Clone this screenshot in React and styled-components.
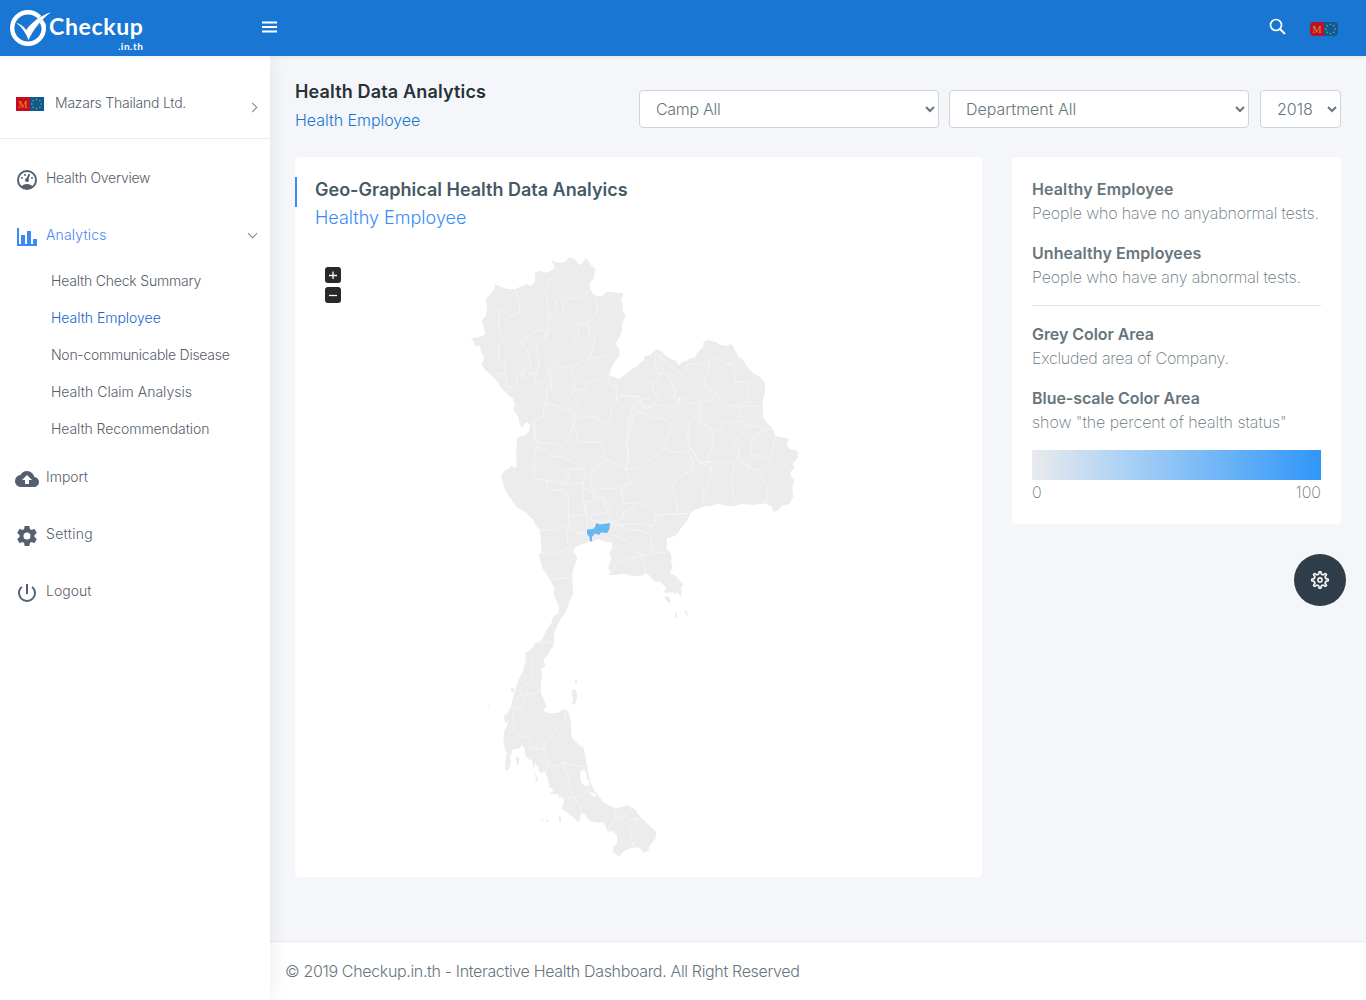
import React from "react";
import styled, { createGlobalStyle } from "styled-components";
import { MdCloudUpload, MdPowerSettingsNew } from "react-icons/md";
import { TfiSettings } from "react-icons/tfi";

const GlobalStyle = createGlobalStyle`
  *, *::before, *::after { box-sizing: border-box; }
  body {
    margin: 0;
    background: #f4f6fa;
    color: #67757c;
    font-family: Inter, Roboto, sans-serif;
    font-size: 16px;
    font-weight: 300;
    line-height: 24px;
  }
  h1, h2, h3, p, ul { margin: 0; padding: 0; }
`;

const Page = styled.div`
  display: flex;
  flex-direction: column;
  height: 1000px;
  overflow: hidden;
`;

const Header = styled.header`
  position: relative;
  z-index: 3;
  flex: none;
  display: flex;
  align-items: center;
  height: 56px;
  padding: 0 28px 0 9px;
  background: #1976d2;
  box-shadow: 0 1px 5px rgba(0, 0, 0, 0.08);
`;

const Brand = styled.a`
  display: flex;
  width: 253px;
  height: 48px;
  color: #fff;
`;

const BrandName = styled.span`
  display: flex;
  flex-direction: column;
  align-items: flex-end;
  width: 95px;
  padding-top: 8px;
  font-family: Lato, sans-serif;
  font-weight: 700;
  font-size: 23px;
  line-height: 28px;
  letter-spacing: 0.65px;
  white-space: nowrap;
`;

const BrandDomain = styled.small`
  font-size: 10px;
  line-height: 12px;
  letter-spacing: 0.55px;
`;

const MenuIcon = styled.svg`
  margin-bottom: 2px;
`;

const HeaderTools = styled.div`
  display: flex;
  align-items: center;
  gap: 24px;
  margin-left: auto;
`;

const SearchIcon = styled.svg`
  margin-bottom: 3px;
`;

const FlagBox = styled.span`
  display: flex;
  margin-top: ${(p) => p.$top || 0}px;
  border-radius: ${(p) => p.$radius || 0}px;
  overflow: hidden;
  opacity: ${(p) => p.$opacity || 1};
`;

const Body = styled.div`
  flex: 1;
  display: flex;
  min-height: 0;
`;

const Sidebar = styled.aside`
  position: relative;
  z-index: 2;
  flex: none;
  width: 270px;
  background: #fff;
  box-shadow: 1px 0 20px rgba(0, 0, 0, 0.08);
  font-size: 14px;
  font-weight: 300;
  color: #56606b;
`;

const Profile = styled.div`
  display: flex;
  align-items: center;
  height: 83px;
  margin-bottom: 11px;
  padding: 13px 12px 0 16px;
  border-bottom: 1px solid #e9ebee;
  gap: 11px;
`;

const Chevron = styled.span`
  width: 7px;
  height: 7px;
  margin: ${(p) => (p.$down ? "0 2px 3px auto" : "8px 2px 0 auto")};
  border: solid #7f8790;
  border-width: 1px 1px 0 0;
  transform: rotate(${(p) => (p.$down ? 135 : 45)}deg);
`;

const NavItem = styled.a`
  display: flex;
  align-items: center;
  height: ${(p) => p.$height || 57}px;
  padding: 0 12px 0 15px;
  color: ${(p) => (p.$active ? "#4a84f6" : "inherit")};
  gap: 7px;
`;

const NavIcon = styled.span`
  display: flex;
  padding-top: ${(p) => p.$drop || 3}px;
  color: ${(p) => (p.$active ? "#398bf7" : "#54606f")};
`;

const SubItem = styled.a`
  display: block;
  height: 37px;
  padding-left: 51px;
  line-height: 35px;
  color: ${(p) => (p.$active ? "#1965cf" : "inherit")};
`;

const Label = styled.span`
  padding-bottom: ${(p) => p.$lift || 0}px;
  letter-spacing: ${(p) => p.$ls || 0}px;
  white-space: nowrap;
`;

const Main = styled.main`
  flex: 1;
  display: flex;
  flex-direction: column;
  min-width: 0;
`;

const TitleBar = styled.div`
  display: flex;
  justify-content: space-between;
  height: 101px;
  padding: 24px 25px 0;
`;

const PageTitle = styled.h1`
  font-size: 18px;
  line-height: 24px;
  font-weight: 600;
  color: #263238;
`;

const Crumb = styled.p`
  margin-top: 4px;
  line-height: 24px;
  color: #1976d2;
`;

const Filters = styled.div`
  display: flex;
  padding-top: 10px;
`;

const Select = styled.select`
  width: ${(p) => p.$width}px;
  height: 38px;
  margin-left: ${(p) => p.$gap || 0}px;
  padding: 6px 12px;
  border: 1px solid #ced4da;
  border-radius: 4px;
  background: #fff;
  color: #67757c;
  font: inherit;
  letter-spacing: ${(p) => p.$ls || 0}px;
`;

const Columns = styled.div`
  flex: 1;
  display: flex;
  align-items: flex-start;
  gap: 30px;
  padding: 0 25px;
`;

const Card = styled.section`
  width: ${(p) => p.$width}px;
  height: ${(p) => p.$height}px;
  padding: 20px;
  border-radius: 4px;
  background: #fff;
`;

const CardTitle = styled.h2`
  margin-left: -20px;
  padding-left: 18px;
  border-left: 2px solid #398bf7;
  font-size: 18px;
  line-height: 26px;
  height: 30px;
  font-weight: 600;
  color: #455a64;
`;

const CardSubtitle = styled.h3`
  font-size: 18px;
  line-height: 22px;
  font-weight: 300;
  color: #398bf7;
`;

const MapArea = styled.div`
  display: flex;
  align-items: flex-start;
  padding: 28px 0 0 10px;
`;

const ZoomControls = styled.div`
  display: flex;
  flex-direction: column;
  gap: 4px;
  width: 16px;
  padding-top: 10px;
`;

const ZoomButton = styled.button`
  display: flex;
  align-items: center;
  justify-content: center;
  width: 16px;
  height: 16px;
  padding: 0;
  border: 0;
  border-radius: 3px;
  background: #292929;
  color: #fff;
`;

const MapSvg = styled.svg`
  margin: -2px 0 0 129px;
  display: block;
`;

const Term = styled.h3`
  font-size: 16px;
  line-height: 24px;
  font-weight: 600;
  color: #67757c;
`;

const Description = styled.p`
  margin-bottom: ${(p) => p.$bottom}px;
  font-weight: 200;
  color: #67757c;
`;

const Rule = styled.hr`
  height: 1px;
  margin: 0 0 16px;
  border: 0;
  background: #e2e4e6;
`;

const Gradient = styled.div`
  height: 30px;
  background: linear-gradient(to right, #e9ebed, #a6cff5 35%, #2f96f9);
`;

const Range = styled.div`
  display: flex;
  justify-content: space-between;
  font-weight: 200;
`;

const Side = styled.div`
  display: flex;
  flex-direction: column;
  width: 329px;
`;

const SettingsButton = styled.button`
  display: flex;
  align-items: center;
  justify-content: center;
  align-self: flex-end;
  width: 52px;
  height: 52px;
  margin: 30px -5px 0 0;
  padding: 0;
  border: 0;
  border-radius: 50%;
  background: #2f3d4a;
  color: #fff;
`;

const Footer = styled.footer`
  flex: none;
  height: 59px;
  padding: 17px 15px;
  border-top: 1px solid #e9ebee;
  background: #fff;
`;

const LogoMark = styled.svg`
  flex: none;
  margin-right: -4.5px;
`;

function CheckLogo() {
  return (
    <LogoMark width="44" height="48" viewBox="0 0 44 48">
      <circle cx="19" cy="24" r="15.8" fill="none" stroke="#fff" strokeWidth="4.4" />
      <path d="M27 17 38 6 44 11 32 24Z" fill="#1976d2" />
      <path d="M34 15.500a17.500 17.500 0 0 1 3 8.500l-4.400 0a14 14 0 0 0-2-5.500Z" fill="#fff" />
      <path d="M7 18.5c3.8 1.2 7.300 3.600 10.200 7.400C23.500 17.500 32 11.500 42 8.300 32.500 15.500 24.500 25 19.500 36c-2.500-7-6.500-12.500-12.500-17.500Z" fill="#fff" />
    </LogoMark>
  );
}

function Flag() {
  const stars = Array.from({ length: 8 }, (_, i) => {
    const a = (i * Math.PI) / 4;
    return [20.5 + 4.7 * Math.cos(a), 7 + 4.7 * Math.sin(a)];
  });
  return (
    <svg width="28" height="14" viewBox="0 0 28 14">
      <rect width="14" height="14" fill="#c40d1e" />
      <rect x="14" width="14" height="14" fill="#0b5a94" />
      <text x="7" y="11" textAnchor="middle" fontFamily="Liberation Serif, serif" fontSize="10.5" fill="#f08a1c">M</text>
      {stars.map(([x, y], i) => (
        <rect key={i} x={x - 0.7} y={y - 0.7} width="1.4" height="1.4" fill="#a3a44b" />
      ))}
    </svg>
  );
}

const gauge =
  "M12,2A10,10 0 0,0 2,12A10,10 0 0,0 12,22A10,10 0 0,0 22,12A10,10 0 0,0 12,2M12,4A8,8 0 0,1 20,12C20,14.4 19,16.5 17.3,18C15.9,16.7 14,16 12,16C10,16 8.2,16.7 6.7,18C5,16.5 4,14.4 4,12A8,8 0 0,1 12,4M14,5.89C13.62,5.9 13.26,6.15 13.1,6.54L11.81,9.77L11.71,10C11,10.13 10.41,10.6 10.14,11.26C9.73,12.29 10.23,13.45 11.26,13.86C12.29,14.27 13.45,13.77 13.86,12.74C14.12,12.08 14,11.32 13.57,10.76L13.67,10.5L14.96,7.29L14.97,7.26C15.17,6.75 14.92,6.17 14.41,5.96C14.28,5.91 14.15,5.89 14,5.89M10,6A1,1 0 0,0 9,7A1,1 0 0,0 10,8A1,1 0 0,0 11,7A1,1 0 0,0 10,6M7,9A1,1 0 0,0 6,10A1,1 0 0,0 7,11A1,1 0 0,0 8,10A1,1 0 0,0 7,9M17,9A1,1 0 0,0 16,10A1,1 0 0,0 17,11A1,1 0 0,0 18,10A1,1 0 0,0 17,9Z";
const bars = "M22,21H2V3H4V19H6V10H10V19H12V6H16V19H18V14H22V21Z";
const cog =
  "M12,15.5A3.5,3.5 0 0,1 8.5,12A3.5,3.5 0 0,1 12,8.5A3.5,3.5 0 0,1 15.5,12A3.5,3.5 0 0,1 12,15.5M19.43,12.97C19.47,12.65 19.5,12.33 19.5,12C19.5,11.67 19.47,11.34 19.43,11L21.54,9.37C21.73,9.22 21.78,8.95 21.66,8.73L19.66,5.27C19.54,5.05 19.27,4.96 19.05,5.05L16.56,6.05C16.04,5.66 15.5,5.32 14.87,5.07L14.5,2.42C14.46,2.18 14.25,2 14,2H10C9.75,2 9.54,2.18 9.5,2.42L9.13,5.07C8.5,5.32 7.96,5.66 7.44,6.05L4.95,5.05C4.73,4.96 4.46,5.05 4.34,5.27L2.34,8.73C2.21,8.95 2.27,9.22 2.46,9.37L4.57,11C4.53,11.34 4.5,11.67 4.5,12C4.5,12.33 4.53,12.65 4.57,12.97L2.46,14.63C2.27,14.78 2.21,15.05 2.34,15.27L4.34,18.73C4.46,18.95 4.73,19.03 4.95,18.95L7.44,17.94C7.96,18.34 8.5,18.68 9.13,18.93L9.5,21.58C9.54,21.82 9.75,22 10,22H14C14.25,22 14.46,21.82 14.5,21.58L14.87,18.93C15.5,18.67 16.04,18.34 16.56,17.94L19.05,18.95C19.27,19.03 19.54,18.95 19.66,18.73L21.66,15.27C21.78,15.05 21.73,14.78 21.54,14.63L19.43,12.97Z";

function Glyph({ d }) {
  return (
    <svg width="24" height="24" viewBox="0 0 24 24" fill="currentColor">
      <path d={d} />
    </svg>
  );
}

const country =
  "M551.700 260 556 262.500 560 262.700 563 262.500 566 261 568 258.500 570 257.300 572 257.800 575 259.300 577 262 578.300 264 581 265 583 262 584 259.300 587.300 259 589 261.500 591 265.300 595.700 269.300 594.500 274 594 278.300 591 281 589.300 284.300 590 288.300 592.700 294 597.300 296 602.700 296 605 293 608.300 292 612 292 616.700 293 623.300 293 623 296 620.700 298.300 622 302 623.300 305 622 310 624 313 625.700 315.700 623.300 321.700 621.500 326 622.300 330 619.300 337.300 615.700 343.300 619.300 349.300 619.700 356 615 361 611.700 366.700 609.300 375 614 377 619.300 379.300 626.700 373.300 632 369 636.700 366.700 640 362.700 644 360 645 356 650 355 653 352 657.700 349 663.300 353.300 667 356.500 671.700 359.300 676.700 360.700 677 363.500 679.300 365 682 362 686.700 361 690 358 695 357.300 697.300 352.700 700 350 703.300 347.300 703.300 342.300 708.300 340 712 341 716.700 342.300 720 345 727.300 346 731.700 344.300 735 350 738.300 356.700 742 359 745 363.300 750 370.700 758.300 376 762 379 765 383.300 765 393.300 763 400 762.700 406.700 763.300 418.300 768 424 771.700 427.300 774 432 776 436 780 437 789 438.700 786.700 444 790 449.300 795 450 797.700 452.300 797.700 458.300 792.300 464.300 795 467.700 791 471 790.300 475 794.300 480 792.300 486.700 793.300 496.700 789.300 504 781.700 506 778 510 775 512 772.500 511 771.700 506 768 505 765 503.300 753.300 505 741.700 504 735 506 728.300 506.300 722 505 718.300 503.300 711 506 703.300 506.700 697 509 691.700 511.700 690 514.300 686.700 521.700 680.700 528.300 678 533 675 536 666.700 538.300 667 543 666 548.300 670 552 671.700 556.700 671 561 672.700 566.700 670 572.700 676.700 576.700 679 580 683.300 584 681 588 681.700 596.700 678 593 675 594 671 592 666 593.300 664 591 667 588 665 586.700 660 581.700 656 582 651.700 579.300 650 576 646.700 573.300 640 576 631.700 576 626 574 621.700 574 613.300 575.300 608.300 575 610.700 571.700 608.500 569 609.300 563.300 611 560 610.700 556.700 609.300 552.700 611 550 612.700 546.700 611.700 542.300 605 541.700 598.300 539.300 594 541 590 541.700 581.700 544.300 575 547.300 573.300 551.700 575 554 577.300 557.700 575 565 572.300 571.700 572.300 583.300 573.300 593.300 570 600 566 611.700 561 618.300 556.700 626.700 554 634 554 641.700 553.300 646.700 550 650 548.300 655 543.300 660 545.700 666 541 669 542.300 675 540.700 685 541 693.300 544 700 546.700 706 543.300 710 546 712.500 550 713.300 558.300 712.700 563.300 709.300 567.700 710 570.700 720 571.700 736.700 574 740 577.300 743.300 580 746 582.300 746.700 581 743 584.300 750 587.300 766.700 590 780 592 786 595 791.700 600 798 605 803.300 615 808.300 623.300 806.700 626 806.500 624 804 628.300 805.700 635 809.300 638 814 641.700 818.300 656 831.700 655.700 838.300 650 845 648.300 850.700 643.300 852.700 641 849 638.300 847.300 630 848.300 623.300 851.700 619.300 856.700 612.700 851.700 613.300 846.700 617.300 843.300 616.700 835 612 831 607.700 831.700 605 825 603 822 598.300 822.700 593 822 588.300 820 586 815 581 813.300 579 822.700 574 818 570 815 565 811 561.700 808.300 564 802 563.300 798.300 558.300 797 558.300 793.300 555 795 553.300 789.300 549 787.300 548.300 780 545 771.700 540 773.300 538 767 535 763.300 534 769 531.700 760 528 759 525 755 525 750 521.700 745 520 748.300 515 749 512.300 750 511 756 509.300 756.700 506 751.700 503.300 741.700 504 731.700 507 726 508.300 721.700 505 718 510.700 707.300 513 698 515 690 518.300 680 523.300 670 526 660 525 653.300 530 650 533.300 646.700 534 644 541.700 640 546.700 630 552 622 552.700 616.700 558.300 613.300 559 606.700 556 600 553.300 593.300 554 588 550 579.300 548 576 543.300 570 540 560 538.300 554.300 541.700 552.700 541 541.700 540 530 536 526 533.300 520 525 512 516.700 507.300 505 490 501 476.700 504 470.700 508 469 511.700 465.700 514 468 516.700 466.700 516 451.700 517.300 438.300 521 436 525 435 529 431 530 425 526.700 421.700 524 425 521.700 427.700 519 422 518.300 416.700 513.300 410 515 405 512.700 398.300 508 395 501.700 388.300 496 380 490 374 485 370 481.700 365 484 356.700 481 352 480 345.700 475 346 473.500 341 470 336.700 473.300 338.300 480 337 485 334 484 328 481.700 320 485 317 487.300 310 486 300 487 297 490 294.300 494 290 495 284 501.700 287.300 508 289 515 289 520 287 526.700 284.300 531 285.700 535 282.300 535 272.700 540 270.700 547.300 272.700 552 270 555 267.300Z";

const borders = [
  {
    x: 460, y: 250,
    d: "M285 52 293 75 270 85 255 122 262 140 262 185 270 200 263 215 264 245 257 262 237 285 227 290 238 345 225 375 225 395 250 403 257 400M165 117 175 145 180 190 160 198 145 197 132 182 118 182 115 245 128 265 115 290 115 322 132 340 137 372 140 412 168 412 172 380 187 370 195 357 M95 375 135 368M187 362 190 382 200 387 210 370 225 372M257 262 250 240 235 238 187 272 190 290 207 310 212 350M262 355 300 315 333 290 355 255 355 220 330 205 310 180 305 150M270 200 285 190 290 150 300 140 310 150 335 143 345 148 365 143 388 118M355 222 385 222 405 198 413 180 408 140M385 222 390 260 405 265 400 295 390 325 333 350 325 348 310 353 290 345 270 365M390 325 435 320 465 290 475 280M333 350 343 375 343 420 370 420 380 402 430 385 450 365M262 355 270 375 275 415 262 408 258 460 250 480 250 500 222 512 222 570M258 460 295 468 305 480 330 478 360 455 340 440 333 427 343 420M330 480 345 505M345 505 375 500 415 505 425 525 450 510 455 475 470 455 468 408 448 400 450 380M470 455 485 435 530 440 548 460 555 475 570 470",
  },
  {
    x: 620, y: 330,
    d: "M107 70 105 100 117 130 143 130 160 175 172 180 162 205M107 72 150 105 180 132 195 125 205 100 240 105 265 90 270 82 300 92 325 105 345 95M267 90 267 120 253 145 253 170 290 190 332 230 380 215 388 155 345 155 340 100M345 95 352 82M117 130 117 152 97 155 100 185 112 205 105 220 70 235 60 200 0 195M162 205 175 210 180 200 200 212 220 222 245 210 270 215 290 195M180 200 175 230 135 230 110 222 75 240M238 222 240 250 240 280 262 285 280 303 300 302 310 280 368 275 352 235 345 225M352 230 425 228M240 250 210 275 203 315 210 355 240 395 270 395 258 382 272 365 278 335 275 305 262 290M368 275 380 290 420 290 435 302 455 297M380 290 362 315 342 330 342 350 358 360 355 385 390 415 420 420 430 455 440 465 442 520M142 355 135 335 150 310 150 280 125 265 100 265 75 250 45 245 30 290 20 350 27 380 17 420M142 352 150 365 200 365 212 352M17 420 60 410 100 380 140 352M205 365 217 395 215 425 195 430 160 460 162 500 172 520 172 555M212 352 235 398 275 410 270 450 250 490 248 530M240 398 300 398 345 398 338 425 335 470 340 490 345 525M345 398 355 385M435 302 400 320 392 350 398 380 420 375 445 390 455 360 468 318M398 380 385 400 390 415",
  },
  {
    x: 490, y: 420,
    d: "M132 0 137 50 145 70 200 70 212 85 235 55 250 20 260 40 265 65 335 68 345 100 345 120 405 140 415 105 410 70 415 0 435 -50 460 -62 480 -66M250 20 256 -20M145 70 133 110 132 165 140 178 170 180 220 190 280 190 285 150 260 130 215 110 195 110 145 80M80 100 130 155M280 190 278 230 285 280 260 288 235 290 235 310 250 335 290 342 292 300 285 285M170 180 170 200 190 210 225 210 235 230 235 290M222 180 240 180 235 165 220 150 255 147 285 150M285 160 300 170 310 145 345 122M300 170 310 215 340 205 385 205 390 200 425 190 410 165 405 140 415 150M395 205 398 250 430 250 450 248 480 260 500 285 600 280M500 285 490 320 450 310 390 315 360 308 360 265 345 265 340 230 320 235 310 215M280 205 312 218 312 245 288 245 290 290 355 275M360 308 400 295 400 278 430 262 430 250M290 290 315 305 360 308M235 310 232 360 240 385 250 395M150 330 210 328 235 310M155 398 190 402 240 385M180 478 245 472M258 340 290 340M370 320 390 315 410 330 450 330 480 345 490 400 455 405 415 365 370 345M490 395 528 398M455 405 468 460M455 405 415 420 380 425 365 460",
  },
  {
    x: 480, y: 600,
    d: "M178 125 222 130M150 150 157 195 155 240 118 270 125 290 135 300 120 325 105 325 92 322M183 270 160 280 130 285M105 325 98 350 103 385 120 410 148 412 152 445 190 447 195 430 235 382 255 365 257 330M190 447 200 475 203 498 230 498 245 487 300 500 322 495M203 498 195 515M248 490 265 530 270 570 285 595 325 575 322 565M285 595 235 590M285 595 303 620 303 645M405 625 405 650 430 655 435 642 445 660 475 655M405 650 410 660 390 675 383 695M475 655 450 690 455 720 460 740",
  },
];

const islands =
  "M575 679.500l2 .5v4h-2ZM571.500 692h5.500v7l-2.500 6-2.500-1 1-5ZM571 690l4-1 2 4-3 1ZM675 612l2 2v4l-2-1ZM665 596l4 1 2 4-2 2-4-4ZM687 611l1 7-4-8ZM506 754l4 3 1 6-3 8-3-2ZM516 757l3 0v8h-2ZM535 772l3 8-2 2ZM559 815l2 2 0 5-2 0ZM541 819.500l3 0v1l-3 0ZM546 820l2 0v2h-2ZM488.500 705l1 0v2h-1ZM504 716l3-3 2 8-4 2ZM511 688l3 0v4h-3ZM550 793l3-2 2 2-4 2Z";

function ThailandMap() {
  return (
    <MapSvg width="330" height="604" viewBox="470 255 330 604" role="img" aria-label="Thailand">
      <g fill="#ececec">
        <path d={country} />
        <path d={islands} />
      </g>
      <g fill="none" stroke="#f7f7f7" strokeWidth="2.3" strokeLinejoin="round">
        {borders.map((b) => (
          <path key={b.x} transform={`translate(${b.x} ${b.y}) scale(0.33333)`} d={b.d} />
        ))}
      </g>
      <path d="M580 771.500 584 770 587 774 586 779 589 780 589 786 585 786 581 782ZM590 793 592 792 597 795 594 797Z" fill="#fff" />
      <path d="M587 529.500 593 529 595 527 596.500 523 600 524.500 610 523 609.500 529 607 533 601 532.500 599 535 595 533.500 592 537 592 541.500 590 541 589.500 537 587 534Z" fill="#67b8f0" />
    </MapSvg>
  );
}

export default function App() {
  return (
    <Page>
      <GlobalStyle />
      <Header>
        <Brand>
          <CheckLogo />
          <BrandName>
            Checkup
            <BrandDomain>.in.th</BrandDomain>
          </BrandName>
        </Brand>
        <MenuIcon width="15" height="12" viewBox="0 0 15 12" fill="#fff">
          <path d="M0 .5h15v2H0zM0 5h15v2H0zM0 9.500h15v2H0z" />
        </MenuIcon>
        <HeaderTools>
          <SearchIcon width="17" height="17" viewBox="0 0 17 17" fill="none" stroke="#fff" strokeWidth="1.7">
            <circle cx="7" cy="7" r="5.5" />
            <path d="m11 11 5 5" strokeWidth="2" />
          </SearchIcon>
          <FlagBox $radius={4} $top={1} $opacity={0.95}><Flag /></FlagBox>
        </HeaderTools>
      </Header>
      <Body>
        <Sidebar>
          <Profile>
            <FlagBox><Flag /></FlagBox>
            <Label $lift={2} $ls={-0.22}>Mazars Thailand Ltd.</Label>
            <Chevron />
          </Profile>
          <NavItem><NavIcon><Glyph d={gauge} /></NavIcon><Label $lift={2} $ls={-0.25}>Health Overview</Label></NavItem>
          <NavItem $active $height={56}>
            <NavIcon $active><Glyph d={bars} /></NavIcon><Label $ls={0.17}>Analytics</Label><Chevron $down />
          </NavItem>
          <SubItem><Label $ls={-0.2}>Health Check Summary</Label></SubItem>
          <SubItem $active><Label $ls={-0.03}>Health Employee</Label></SubItem>
          <SubItem><Label $ls={-0.27}>Non-communicable Disease</Label></SubItem>
          <SubItem><Label $ls={0}>Health Claim Analysis</Label></SubItem>
          <SubItem><Label $ls={-0.08}>Health Recommendation</Label></SubItem>
          <NavItem><NavIcon $drop={5}><MdCloudUpload size={24} /></NavIcon><Label>Import</Label></NavItem>
          <NavItem><NavIcon $drop={5}><Glyph d={cog} /></NavIcon><Label $ls={0.3}>Setting</Label></NavItem>
          <NavItem><NavIcon $drop={5}><MdPowerSettingsNew size={24} /></NavIcon><Label>Logout</Label></NavItem>
        </Sidebar>
        <Main>
          <TitleBar>
            <div>
              <PageTitle><Label $ls={0.16}>Health Data Analytics</Label></PageTitle>
              <Crumb><Label $ls={-0.04}>Health Employee</Label></Crumb>
            </div>
            <Filters>
              <Select $width={300} $ls={-0.3}><option>Camp All</option></Select>
              <Select $width={300} $gap={10}><option>Department All</option></Select>
              <Select $width={81} $gap={11}><option>2018</option></Select>
            </Filters>
          </TitleBar>
          <Columns>
            <Card $width={687} $height={720}>
              <CardTitle><Label>Geo-Graphical Health Data Analyics</Label></CardTitle>
              <CardSubtitle><Label>Healthy Employee</Label></CardSubtitle>
              <MapArea>
                <ZoomControls>
                  <ZoomButton aria-label="Zoom in">
                    <svg width="8" height="8" viewBox="0 0 8 8" fill="none" stroke="#fff" strokeWidth="1.3"><path d="M0 4.500h8M4 .5v8" /></svg>
                  </ZoomButton>
                  <ZoomButton aria-label="Zoom out">
                    <svg width="8" height="8" viewBox="0 0 8 8" fill="none" stroke="#fff" strokeWidth="1.3"><path d="M0 4.500h8" /></svg>
                  </ZoomButton>
                </ZoomControls>
                <ThailandMap />
              </MapArea>
            </Card>
            <Side>
              <Card $width={329} $height={367}>
                <Term><Label $ls={0.13}>Healthy Employee</Label></Term>
                <Description $bottom={16}><Label $ls={-0.14}>People who have no anyabnormal tests.</Label></Description>
                <Term><Label $ls={0.08}>Unhealthy Employees</Label></Term>
                <Description $bottom={16}><Label $ls={-0.13}>People who have any abnormal tests.</Label></Description>
                <Rule />
                <Term><Label $ls={-0.06}>Grey Color Area</Label></Term>
                <Description $bottom={16}><Label $ls={-0.2}>Excluded area of Company.</Label></Description>
                <Term><Label $ls={-0.05}>Blue-scale Color Area</Label></Term>
                <Description $bottom={16}><Label $ls={-0.04}>show "the percent of health status"</Label></Description>
                <Gradient />
                <Range><span>0</span><span>100</span></Range>
              </Card>
              <SettingsButton aria-label="Settings">
                <TfiSettings size={18} stroke="currentColor" strokeWidth="0.6" />
              </SettingsButton>
            </Side>
          </Columns>
          <Footer><Label $ls={-0.34}>© 2019 Checkup.in.th - Interactive Health Dashboard. All Right Reserved</Label></Footer>
        </Main>
      </Body>
    </Page>
  );
}
